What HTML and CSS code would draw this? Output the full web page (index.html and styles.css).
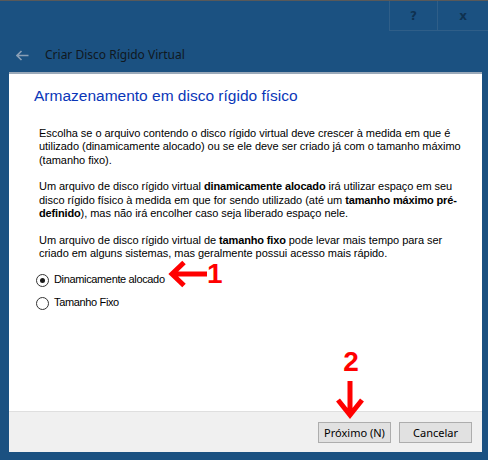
FILE: index.html
```html
<!DOCTYPE html>
<html lang="pt">
<head>
<meta charset="utf-8">
<title>Criar Disco Rígido Virtual</title>
<link rel="stylesheet" href="styles.css">
</head>
<body>
<div class="window">
  <div class="titlebar">
    <div class="caption">
      <div class="cap-btn">?</div>
      <div class="cap-btn cap-close">x</div>
    </div>
  </div>
  <div class="header">
    <svg class="back" width="13" height="11" viewBox="0 0 13 11">
      <path d="M1 5.5 H12.5 M5.5 1 L1 5.5 L5.5 10" fill="none" stroke="#8a9fb6" stroke-width="1.6"/>
    </svg>
    <span class="title">Criar Disco Rígido Virtual</span>
  </div>
  <div class="dialog">
    <div class="content">
      <h1 class="heading">Armazenamento em disco rígido físico</h1>
      <div class="body">
        <p>Escolha se o arquivo contendo o disco rígido virtual deve crescer à medida em que é<br>utilizado (dinamicamente alocado) ou se ele deve ser criado já com o tamanho máximo<br>(tamanho fixo).</p>
        <p>Um arquivo de disco rígido virtual <b>dinamicamente alocado</b> irá utilizar espaço em seu<br>disco rígido físico à medida em que for sendo utilizado (até um <b>tamanho máximo pré-</b><br><b>definido</b>), mas não irá encolher caso seja liberado espaço nele.</p>
        <p>Um arquivo de disco rígido virtual de <b>tamanho fixo</b> pode levar mais tempo para ser<br>criado em alguns sistemas, mas geralmente possui acesso mais rápido.</p>
        <div class="options">
          <label class="option"><span class="radio checked"></span>Dinamicamente alocado</label>
          <label class="option"><span class="radio"></span>Tamanho Fixo</label>
        </div>
      </div>
    </div>
    <div class="footer">
      <button class="btn">Próximo (N)</button>
      <button class="btn">Cancelar</button>
    </div>
  </div>
</div>
<div class="mark mark1">
  <svg width="40" height="28" viewBox="0 0 40 28">
    <path d="M39 14 H5 M16 2.5 L4 14 L16 25.5" fill="none" stroke="#ff0000" stroke-width="5"/>
  </svg>
  <span class="num">1</span>
</div>
<div class="mark mark2">
  <span class="num">2</span>
  <svg width="30" height="40" viewBox="0 0 30 40">
    <path d="M14 0 V34 M2 19 L14 34 L26 19" fill="none" stroke="#ff0000" stroke-width="5"/>
  </svg>
</div>
</body>
</html>
```

FILE: styles.css
```css
html, body {
  margin: 0;
  padding: 0;
}
body {
  width: 488px;
  height: 460px;
  overflow: hidden;
  background: #1b5181;
  position: relative;
  font-family: "Liberation Sans", Arial, sans-serif;
}
.window {
  border-top: 1px solid #595959;
  height: 459px;
  display: flex;
  flex-direction: column;
}
.titlebar {
  height: 29px;
  display: flex;
  justify-content: flex-end;
}
.caption {
  display: flex;
  border-left: 1px solid #2f5e88;
  border-bottom: 1px solid #2f5e88;
  height: 29px;
}
.cap-btn {
  width: 47px;
  display: flex;
  align-items: center;
  justify-content: center;
  color: #0f3150;
  font-family: "DejaVu Sans", sans-serif;
  font-weight: bold;
  font-size: 12px;
}
.cap-close {
  border-left: 1px solid #2f5e88;
  width: 50px;
}
.header {
  height: 25px;
  padding-top: 17px;
  display: flex;
  align-items: flex-start;
}
.back {
  margin: 3px 0 0 16px;
}
.title {
  margin-left: 16px;
  font-family: "Noto Sans", "Open Sans", sans-serif;
  font-size: 12px;
  line-height: 16px;
  color: #101820;
}
.dialog {
  margin: 0 6px 0 9px;
  border-top: 2px solid #9aa9b9;
  display: flex;
  flex-direction: column;
}
.content {
  background: #ffffff;
  height: 337px;
  padding: 13px 0 0 25px;
  box-sizing: border-box;
}
.heading {
  margin: 0;
  font-weight: normal;
  font-size: 15.5px;
  line-height: 18px;
  color: #0a36b8;
}
.body {
  margin-top: 22px;
  padding-left: 5px;
  font-size: 11px;
  line-height: 13.33px;
  color: #000;
  white-space: nowrap;
  letter-spacing: -0.04px;
}
.body p {
  margin: 0 0 13.33px 0;
}
.body b {
  letter-spacing: -0.15px;
}
.options {
  margin-top: 1px;
  display: flex;
  flex-direction: column;
  gap: 10px;
}
.option {
  display: flex;
  align-items: center;
  height: 13px;
  margin-left: -3px;
  letter-spacing: -0.35px;
}
.radio {
  width: 11px;
  height: 11px;
  border: 1px solid #333;
  border-radius: 50%;
  background: #fff;
  margin-right: 5px;
  display: flex;
  align-items: center;
  justify-content: center;
}
.radio.checked::after {
  content: "";
  width: 5px;
  height: 5px;
  border-radius: 50%;
  background: #1a1a1a;
}
.footer {
  border-top: 1px solid #dfdfdf;
  background: #f0f0f0;
  height: 41px;
  box-sizing: border-box;
  padding: 10px 10px 0 0;
  display: flex;
  justify-content: flex-end;
  align-items: flex-start;
  gap: 8px;
}
.btn {
  width: 73px;
  height: 21px;
  border: 1px solid #adadad;
  background: #e1e1e1;
  font-family: "Noto Sans", "Open Sans", sans-serif;
  font-size: 11px;
  color: #000;
  padding: 0;
  margin: 0;
}
.mark {
  position: absolute;
  display: flex;
}
.num {
  color: #ff0000;
  font-family: "Liberation Sans", Arial, sans-serif;
  font-weight: bold;
  font-size: 28px;
  line-height: 28px;
}
.mark1 {
  left: 168px;
  top: 260px;
  align-items: flex-start;
}
.mark1 .num {
  margin-left: -1px;
}
.mark2 {
  left: 336px;
  top: 348px;
  flex-direction: column;
  align-items: center;
  width: 30px;
}
.mark2 svg {
  margin-top: 5px;
}
```
